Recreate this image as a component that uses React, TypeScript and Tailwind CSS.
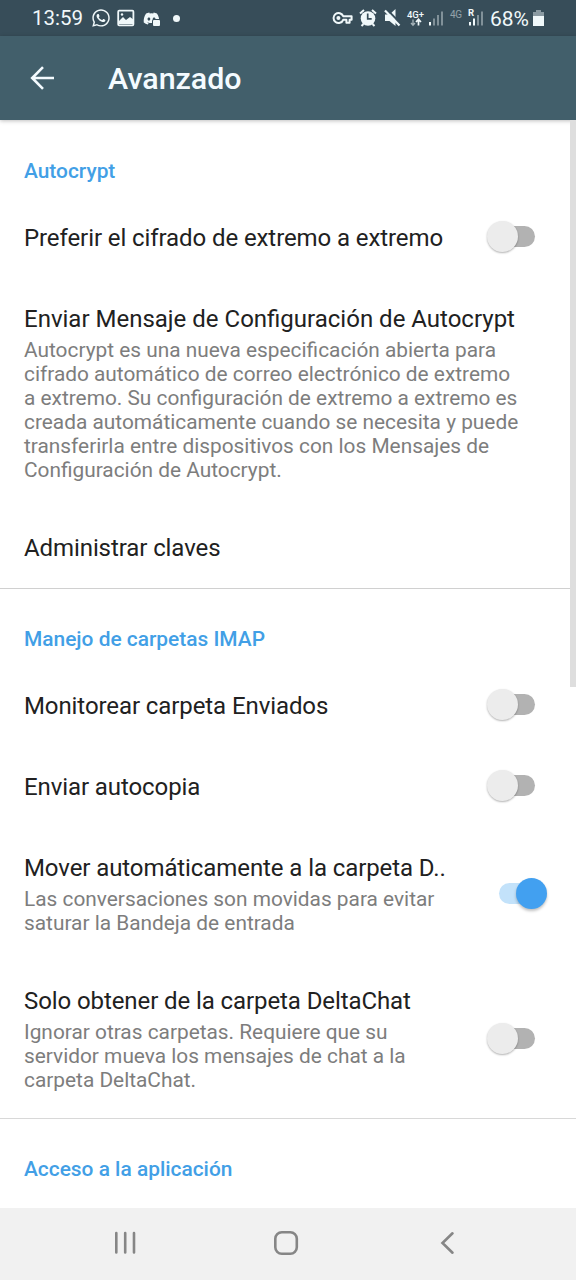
import type { ReactNode } from "react";
import { FaWhatsapp, FaDiscord } from "react-icons/fa";

function Switch({ on = false }: { on?: boolean }) {
  return (
    <span
      role="switch"
      aria-checked={on}
      className={`relative mb-[3px] block h-[21px] w-9 shrink-0 rounded-full ${on ? "bg-[#c3e2fa]" : "bg-[#b2b2b2]"}`}
    >
      <span
        className={`absolute -top-[5px] size-[31px] rounded-full ${
          on
            ? "left-[17px] bg-[#42a0f0] shadow-[0_2px_3px_rgba(0,0,0,0.25)]"
            : "-left-3 bg-[#ececec] shadow-[0_1px_2px_rgba(0,0,0,0.3)]"
        }`}
      />
    </span>
  );
}

function SectionTitle({ children }: { children: ReactNode }) {
  return (
    <h2 className="flex h-[76px] items-end px-6 pb-[14px] text-[20.9px] leading-6 font-medium text-[#429fe6]">
      {children}
    </h2>
  );
}

interface RowProps {
  title: string;
  lines?: string[];
  toggle?: "on" | "off";
  wide?: boolean;
}

function Row({ title, lines, toggle, wide = false }: RowProps) {
  return (
    <div className={`flex items-center justify-between pt-[27px] pr-[41px] pl-6 ${lines ? "pb-[25px]" : "pb-[26px]"}`}>
      <div className="whitespace-nowrap">
        <div className={`text-[24px] leading-7 text-[#212121] ${wide ? "tracking-normal" : "tracking-[-0.09px]"}`}>
          {title}
        </div>
        {lines && (
          <p className="pt-[5px] text-[20.85px] leading-6 text-[#7d7d7d]">
            {lines.map((line) => (
              <span key={line} className="block">{line}</span>
            ))}
          </p>
        )}
      </div>
      {toggle && <Switch on={toggle === "on"} />}
    </div>
  );
}

function StatusBar() {
  return (
    <div className="flex h-9 shrink-0 items-center bg-[#374d59] pr-[30px] pl-8 text-[#f0f8fa]">
      <span className="w-[59px] text-[20.5px] leading-6">13:59</span>
      <FaWhatsapp size={20} />
      <svg className="ml-[6px]" width="18" height="18" viewBox="0 0 18 18">
        <rect x="1.2" y="1.7" width="15.2" height="14.6" rx="1" fill="none" stroke="currentColor" strokeWidth="1.8" />
        <path d="M2 15V12l4-4 3 3 4-3 4 3v4z" fill="currentColor" />
        <circle cx="5" cy="5.5" r="1.2" fill="currentColor" />
      </svg>
      <span className="relative ml-2 block">
        <FaDiscord size={17} />
        <span className="absolute right-0 bottom-[1px] h-[6px] w-[7px] rounded-[1px] bg-[#f0f8fa] ring-1 ring-[#374d59]" />
      </span>
      <span className="ml-[13px] size-[7px] rounded-full bg-[#f0f8fa]" />
      <svg className="ml-auto" width="214" height="36" viewBox="-1 0 214 36" fill="currentColor">
        <g fill="none" stroke="currentColor" strokeWidth="2" transform="translate(-1 0)">
          <path d="M11.2 16.2h8.4v3.600h-2v3h-3.200v-3h-3.200a5 5 0 1 1 0-3.600z" strokeLinejoin="round" />
          <circle cx="6.400" cy="18" r="1" />
        </g>
        <g transform="translate(-1 0)">
          <circle cx="36" cy="18.500" r="7.300" />
          <path d="M28 13.400l4-3.500M44 13.400l-4-3.500M31.500 24l-2 2M40.500 24l2 2" stroke="currentColor" strokeWidth="2" />
          <path d="M35.700 13.500v5.300h4" fill="none" stroke="#374d59" strokeWidth="1.700" />
          <path d="M53 14.500h4.500l6-5.500v17l-6-5H53z" />
          <path d="M54.500 9l15 15.500" stroke="#374d59" strokeWidth="2" />
          <path d="M53 10.500l14.500 15" stroke="currentColor" strokeWidth="2.200" />
          <text x="75" y="17.500" fontSize="9.500" fontWeight="500" textLength="17">4G+</text>
          <path d="M81 19.500v5.500M79 23l2 2.300 2-2.300" fill="none" stroke="currentColor" strokeOpacity=".6" strokeWidth="1.300" />
          <path d="M86.500 25.500v-6M84 22l2.500-2.700 2.500 2.700" fill="none" stroke="currentColor" strokeWidth="1.700" />
          <rect x="97" y="22" width="2" height="3.500" />
          <g fillOpacity=".4">
            <rect x="101" y="18.500" width="2" height="7" />
            <rect x="105" y="15" width="2" height="10.500" />
            <rect x="109" y="11.500" width="2" height="14" />
          </g>
          <text x="118" y="18" fontSize="10" fillOpacity=".5" textLength="12">4G</text>
          <text x="136" y="16" fontSize="9.500" fontWeight="700">R</text>
          <rect x="137" y="22" width="2" height="3.500" />
          <rect x="141" y="18.500" width="2" height="7" />
          <g fillOpacity=".4">
            <rect x="145" y="15" width="2" height="10.500" />
            <rect x="149" y="11.500" width="2" height="14" />
          </g>
        </g>
        <text x="157" y="25.500" fontSize="21" textLength="39" lengthAdjust="spacingAndGlyphs">68%</text>
        <path d="M203 10h5v2h3v4h-11v-4h3z" fillOpacity=".45" />
        <path d="M200 16h11v10h-11z" />
      </svg>
    </div>
  );
}

export default function App() {
  return (
    <div className="flex h-[1280px] w-[576px] flex-col overflow-hidden bg-white font-[Roboto,sans-serif]">
      <StatusBar />
      <header className="z-10 flex h-[84px] shrink-0 items-center bg-[#425f6b] pl-[30px] text-[#f4fbff] shadow-[0_1px_4px_rgba(0,0,0,0.25)]">
        <svg width="26" height="26" viewBox="0 0 26 26" fill="none" stroke="currentColor" strokeWidth="2.600">
          <path d="M24 13H2M13 2.200L2.200 13 13 23.800" />
        </svg>
        <h1 className="ml-[52px] pt-[2px] text-[30.4px] leading-9 font-medium">Avanzado</h1>
      </header>
      <main className="flex min-h-0 flex-1 overflow-hidden">
        <div className="w-[570px] shrink-0">
          <section className="h-[469px] w-[576px] border-b border-[#d0d0d0] pt-[1px]">
            <SectionTitle>Autocrypt</SectionTitle>
            <Row title="Preferir el cifrado de extremo a extremo" toggle="off" />
            <Row
              wide
              title="Enviar Mensaje de Configuración de Autocrypt"
              lines={[
                "Autocrypt es una nueva especificación abierta para",
                "cifrado automático de correo electrónico de extremo",
                "a extremo. Su configuración de extremo a extremo es",
                "creada automáticamente cuando se necesita y puede",
                "transferirla entre dispositivos con los Mensajes de",
                "Configuración de Autocrypt.",
              ]}
            />
            <Row title="Administrar claves" />
          </section>
          <section className="h-[530px] w-[576px] border-b border-[#d8d8d8]">
            <SectionTitle>Manejo de carpetas IMAP</SectionTitle>
            <Row title="Monitorear carpeta Enviados" toggle="off" />
            <Row title="Enviar autocopia" toggle="off" />
            <Row
              title="Mover automáticamente a la carpeta D.."
              lines={["Las conversaciones son movidas para evitar", "saturar la Bandeja de entrada"]}
              toggle="on"
            />
            <Row
              title="Solo obtener de la carpeta DeltaChat"
              lines={["Ignorar otras carpetas. Requiere que su", "servidor mueva los mensajes de chat a la", "carpeta DeltaChat."]}
              toggle="off"
            />
          </section>
          <SectionTitle>Acceso a la aplicación</SectionTitle>
        </div>
        <div className="z-10 h-[567px] w-[6px] bg-[#dedede]" />
      </main>
      <nav className="flex h-[72px] shrink-0 items-center bg-[#f1f1f1] text-[#868686]">
        <svg width="576" height="72" viewBox="0 0 576 72" fill="none" stroke="currentColor" strokeWidth="2.600" strokeLinecap="round">
          <path d="M116.300 25v19.500M125.200 25v19.500M134 25v19.500" />
          <rect x="275.300" y="24.300" width="21.500" height="21.500" rx="6.500" />
          <path d="M452.500 25.300L442.500 35l10 9.700" />
        </svg>
      </nav>
    </div>
  );
}
